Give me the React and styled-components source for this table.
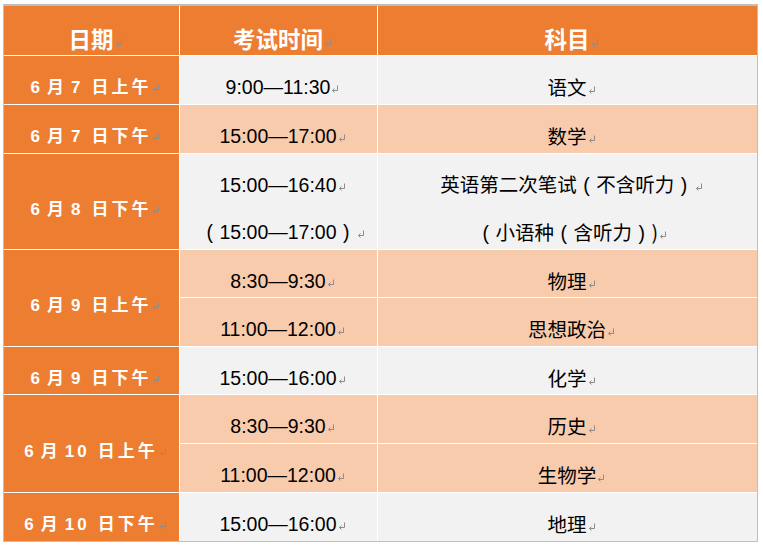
import React from 'react';
import styled, { createGlobalStyle } from 'styled-components';

const Global = createGlobalStyle`
  html, body { margin: 0; padding: 0; background: #fff; }
`;

const Page = styled.div`
  padding: 4px 0 0 3px;
`;

const Table = styled.div`
  display: grid;
  width: max-content;
  grid-template-columns: 175px 197px 379px;
  grid-template-rows: 49px 48px 48px 47px 47px 47px 48px 47px 48px 48px 48px;
  gap: 1px;
  background: #fff;
  border: 1px solid #bfbfbf;
  border-top-width: 2px;
`;

const tones = {
  head: '#ED7D31',
  date: '#ED7D31',
  gray: '#F2F2F2',
  peach: '#F8CBAD',
};

const Cell = styled.div`
  grid-row: span ${(p) => p.$span || 1};
  background: ${(p) => tones[p.$tone]};
  color: ${(p) => (p.$tone === 'head' || p.$tone === 'date' ? '#fff' : '#000')};
  display: flex;
  flex-direction: column;
  min-width: 0;
`;

const Line = styled.div`
  flex: 1;
  display: flex;
  align-items: center;
  justify-content: center;
  padding: 14px 0 0 8px;
  white-space: nowrap;
`;

const HeadTxt = styled.span`
  font-family: "Noto Sans CJK SC", sans-serif;
  font-weight: 700;
  font-size: 22.5px;
  line-height: 24px;
`;

const DateTxt = styled.span`
  font-family: "Noto Sans CJK SC", sans-serif;
  font-weight: 700;
  font-size: 17px;
  letter-spacing: 3px;
  line-height: 24px;
`;

const Num = styled.span`
  font-family: "Liberation Sans", sans-serif;
  font-weight: 700;
  margin-left: ${(p) => p.$l || 0}px;
  margin-right: ${(p) => p.$r || 0}px;
`;

const TimeTxt = styled.span`
  font-family: "Liberation Sans", "Noto Sans CJK SC", sans-serif;
  font-size: 19.5px;
  line-height: 24px;
`;

const SubjTxt = styled.span`
  font-family: "Noto Sans CJK SC", sans-serif;
  font-size: 19.5px;
  line-height: 24px;
`;

const Paren = styled.span`
  display: inline-block;
  width: 1em;
  text-align: center;
  font-family: "Liberation Sans", sans-serif;
`;

const MarkSvg = styled.svg`
  display: inline-block;
  vertical-align: 1px;
  margin-left: ${(p) => p.$gap || 1}px;
  letter-spacing: 0;
`;

const Mark = ({ gap }) => (
  <MarkSvg $gap={gap} width="8" height="8" viewBox="0 0 8 8">
    <path d="M6.5 0.5V5.5H1.5" fill="none" stroke="#8c8c8c" strokeWidth="1" />
    <path d="M3.5 3.5L1.5 5.5L3.5 7.5" fill="none" stroke="#8c8c8c" strokeWidth="1" />
  </MarkSvg>
);

const DateLabel = ({ day, tail }) => (
  <DateTxt>
    <Num $r={4}>6</Num>月<Num $l={4} $r={8}>{day}</Num>日{tail}
    <Mark gap={0} />
  </DateTxt>
);

const Head = ({ children }) => (
  <Cell $tone="head">
    <Line>
      <HeadTxt>
        {children}
        <Mark />
      </HeadTxt>
    </Line>
  </Cell>
);

const DateCell = ({ day, tail, span }) => (
  <Cell $tone="date" $span={span}>
    <Line>
      <DateLabel day={day} tail={tail} />
    </Line>
  </Cell>
);

const TimeCell = ({ tone, lines, span }) => (
  <Cell $tone={tone} $span={span}>
    {lines.map((l, i) => (
      <Line key={i}>
        <TimeTxt>
          {l}
          <Mark />
        </TimeTxt>
      </Line>
    ))}
  </Cell>
);

const SubjCell = ({ tone, lines, span }) => (
  <Cell $tone={tone} $span={span}>
    {lines.map((l, i) => (
      <Line key={i}>
        <SubjTxt>
          {l}
          <Mark />
        </SubjTxt>
      </Line>
    ))}
  </Cell>
);

export default function App() {
  return (
    <Page>
      <Global />
      <Table>
        <Head>日期</Head>
        <Head>考试时间</Head>
        <Head>科目</Head>

        <DateCell day="7" tail="上午" />
        <TimeCell tone="gray" lines={['9:00—11:30']} />
        <SubjCell tone="gray" lines={['语文']} />

        <DateCell day="7" tail="下午" />
        <TimeCell tone="peach" lines={['15:00—17:00']} />
        <SubjCell tone="peach" lines={['数学']} />

        <DateCell day="8" tail="下午" span={2} />
        <TimeCell
          tone="gray"
          span={2}
          lines={[
            '15:00—16:40',
            <>
              <Paren>(</Paren>15:00—17:00<Paren>)</Paren>
            </>,
          ]}
        />
        <SubjCell
          tone="gray"
          span={2}
          lines={[
            <>
              英语第二次笔试<Paren>(</Paren>不含听力<Paren>)</Paren>
            </>,
            <>
              <Paren>(</Paren>小语种<Paren>(</Paren>含听力<Paren>)</Paren>)
            </>,
          ]}
        />

        <DateCell day="9" tail="上午" span={2} />
        <TimeCell tone="peach" lines={['8:30—9:30']} />
        <SubjCell tone="peach" lines={['物理']} />
        <TimeCell tone="peach" lines={['11:00—12:00']} />
        <SubjCell tone="peach" lines={['思想政治']} />

        <DateCell day="9" tail="下午" />
        <TimeCell tone="gray" lines={['15:00—16:00']} />
        <SubjCell tone="gray" lines={['化学']} />

        <DateCell day="10" tail="上午" span={2} />
        <TimeCell tone="peach" lines={['8:30—9:30']} />
        <SubjCell tone="peach" lines={['历史']} />
        <TimeCell tone="peach" lines={['11:00—12:00']} />
        <SubjCell tone="peach" lines={['生物学']} />

        <DateCell day="10" tail="下午" />
        <TimeCell tone="gray" lines={['15:00—16:00']} />
        <SubjCell tone="gray" lines={['地理']} />
      </Table>
    </Page>
  );
}
